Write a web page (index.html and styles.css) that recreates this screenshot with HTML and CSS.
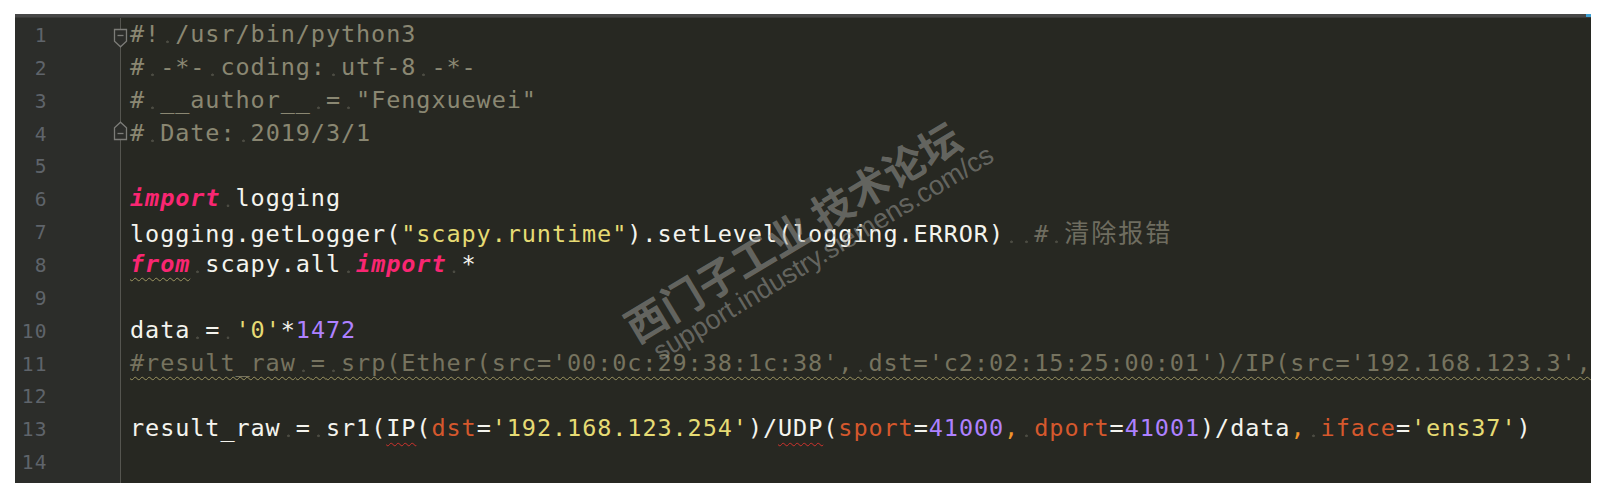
FILE: index.html
```html
<!DOCTYPE html>
<html lang="zh">
<head>
<meta charset="utf-8">
<title>editor</title>
<link rel="stylesheet" href="styles.css">
</head>
<body>
<div class="page">
  <div class="editor">
    <div class="tabbar"><span class="tabmark"></span></div>
    <div class="body">
      <div class="gutter">
        <div class="num">1</div>
        <div class="num">2</div>
        <div class="num">3</div>
        <div class="num">4</div>
        <div class="num">5</div>
        <div class="num">6</div>
        <div class="num">7</div>
        <div class="num">8</div>
        <div class="num">9</div>
        <div class="num">10</div>
        <div class="num">11</div>
        <div class="num">12</div>
        <div class="num">13</div>
        <div class="num">14</div>
        <svg class="fold fold-open" viewBox="0 0 15 20" width="15" height="20"><path d="M1.5 1.5H13.5V13.2L7.5 18.8L1.5 13.2Z" /><path d="M4.5 7.5H10.5" /></svg>
        <svg class="fold fold-close" viewBox="0 0 15 20" width="15" height="20"><path d="M1.5 18.5H13.5V6.8L7.5 1.2L1.5 6.8Z" /><path d="M4.5 12.5H10.5" /></svg>
      </div>
      <div class="code">
        <div class="line cm1">#!<span class="s"> </span>/usr/bin/python3</div>
        <div class="line cm1">#<span class="s"> </span>-*-<span class="s"> </span>coding:<span class="s"> </span>utf-8<span class="s"> </span>-*-</div>
        <div class="line cm1">#<span class="s"> </span>__author__<span class="s"> </span>=<span class="s"> </span>"Fengxuewei"</div>
        <div class="line cm1">#<span class="s"> </span>Date:<span class="s"> </span>2019/3/1</div>
        <div class="line"></div>
        <div class="line"><span class="kw">import</span><span class="s"> </span>logging</div>
        <div class="line">logging.getLogger(<span class="str">"scapy.runtime"</span>).setLevel(logging.ERROR)<span class="s"> </span><span class="s"> </span><span class="cm2">#<span class="s"> </span><span class="cjk">清除报错</span></span></div>
        <div class="line"><span class="kw warn">from</span><span class="s"> </span>scapy.all<span class="s"> </span><span class="kw">import</span><span class="s"> </span>*</div>
        <div class="line"></div>
        <div class="line">data<span class="s"> </span>=<span class="s"> </span><span class="str">'0'</span>*<span class="n">1472</span></div>
        <div class="line"><span class="cm3 warn">#result_raw<span class="s"> </span>=<span class="s"> </span>srp(Ether(src='00:0c:29:38:1c:38',<span class="s"> </span>dst='c2:02:15:25:00:01')/IP(src='192.168.123.3',</span></div>
        <div class="line"></div>
        <div class="line">result_raw<span class="s"> </span>=<span class="s"> </span>sr1(<span class="err">IP</span>(<span class="arg">dst</span>=<span class="str">'192.168.123.254'</span>)/<span class="err">UDP</span>(<span class="arg">sport</span>=<span class="n">41000</span><span class="comma">,</span><span class="s"> </span><span class="arg">dport</span>=<span class="n">41001</span>)/data<span class="comma">,</span><span class="s"> </span><span class="arg">iface</span>=<span class="str">'ens37'</span>)</div>
        <div class="line"></div>
      </div>
    </div>
    <div class="wm">
      <div class="wm-cn">西门子工业 技术论坛</div>
      <div class="wm-en">support.industry.siemens.com/cs</div>
    </div>
  </div>
</div>
</body>
</html>
```
FILE: styles.css
```css
* { box-sizing: border-box; }
html, body { margin: 0; background: #ffffff; }
.page { padding: 14px 0 0 15px; }
.editor {
  position: relative;
  width: 1576px;
  height: 469px;
  background: #272822;
  display: flex;
  flex-direction: column;
  overflow: hidden;
}
.tabbar {
  height: 4px;
  flex: none;
  background: #474747;
  border-bottom: 1px solid #3a3a38;
  display: flex;
  justify-content: flex-end;
}
.tabmark { width: 5px; background: #3d9fd3; }
.body { flex: 1; display: flex; min-height: 0; }
.gutter {
  position: relative;
  flex: none;
  width: 106px;
  background: #2c2d2a;
  border-right: 1px solid #55554f;
  padding: 2px 72px 0 0;
  font-family: "DejaVu Sans Mono", monospace;
  font-size: 19.5px;
  letter-spacing: 1.4px;
  color: #5f646a;
}
.num { height: 32.86px; line-height: 32.86px; text-align: right; white-space: pre; }
.fold { position: absolute; left: 98px; fill: #2c2d2a; stroke: #7c7c78; stroke-width: 1.3; }
.fold-open { top: 10px; }
.fold-close { top: 103px; }
.code {
  flex: 1;
  min-width: 0;
  overflow: hidden;
  padding-left: 9px;
  font-family: "DejaVu Sans Mono", monospace;
  font-size: 23.5px;
  letter-spacing: 0.92px;
  color: #f4f4ee;
}
.line { height: 32.86px; line-height: 32.86px; white-space: pre; }
.s {
  background: radial-gradient(circle at 50% 78%, #4b4b42 0, #4b4b42 1px, rgba(0,0,0,0) 1.7px);
}
.cm1 { color: #8a8772; }
.cm2 { color: #6f6d60; }
.cm3 { color: #76735f; }
.cjk {
  font-family: "Noto Sans CJK SC", sans-serif;
  font-size: 25px;
  letter-spacing: 2px;
}
.kw { color: #f92672; font-style: italic; font-weight: bold; }
.str { color: #e6db74; }
.n { color: #ae81ff; }
.arg { color: #d5582d; }
.comma { color: #f0952b; }
.warn {
  text-decoration: underline wavy #9c9461;
  text-decoration-thickness: 1px;
  text-underline-offset: 5px;
}
.err {
  text-decoration: underline wavy #d0322c;
  text-decoration-thickness: 1px;
  text-underline-offset: 6px;
}
.wm {
  position: absolute;
  left: 784px;
  top: 228px;
  transform: translate(-50%, -50%) rotate(-31deg);
  color: rgba(160, 160, 156, 0.52);
  display: flex;
  flex-direction: column;
  align-items: center;
  pointer-events: none;
  white-space: pre;
}
.wm-cn {
  font-family: "Noto Sans CJK SC", sans-serif;
  font-weight: bold;
  font-size: 41px;
  line-height: 44px;
  letter-spacing: 0.5px;
}
.wm-en {
  font-family: "Liberation Sans", Arial, sans-serif;
  font-size: 27px;
  line-height: 28px;
  margin-left: 30px;
}
```
